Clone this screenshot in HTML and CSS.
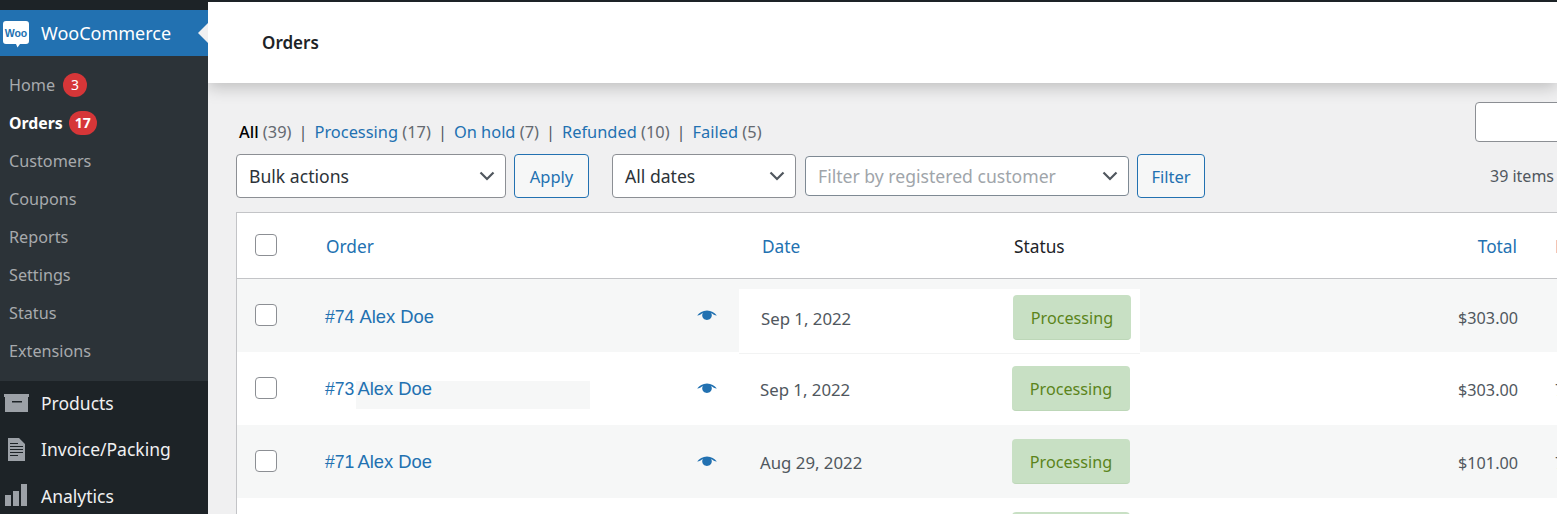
FILE: index.html
```html
<!DOCTYPE html>
<html lang="en">
<head>
<meta charset="utf-8">
<title>Orders</title>
<link rel="stylesheet" href="styles.css">
</head>
<body>
<aside class="sidebar">
  <div class="woo-head">
    <svg class="woo-logo" viewBox="0 0 26 27" width="26" height="27">
      <path class="logo-bubble" d="M3 0h20a3 3 0 0 1 3 3v17a3 3 0 0 1-3 3h-6l-2.500 3.500L13 23H3a3 3 0 0 1-3-3V3a3 3 0 0 1 3-3z"/>
      <text class="logo-text" x="13" y="15.500" text-anchor="middle">Woo</text>
    </svg>
    <span>WooCommerce</span>
  </div>
  <ul class="submenu">
    <li>Home <b class="count">3</b></li>
    <li class="current">Orders <b class="count">17</b></li>
    <li>Customers</li>
    <li>Coupons</li>
    <li>Reports</li>
    <li>Settings</li>
    <li>Status</li>
    <li>Extensions</li>
  </ul>
  <ul class="menu">
    <li>
      <svg class="menu-icon" viewBox="0 0 25 18" width="25" height="18"><path d="M0 0h25v3H0z"/><path fill-rule="evenodd" d="M1 3h23v15H1zM8 7v1.500h10V7z"/></svg>
      <span>Products</span>
    </li>
    <li>
      <svg class="menu-icon" viewBox="0 0 25 23" width="25" height="23"><path fill-rule="evenodd" d="M4 0h11l6 6v17H4zM6 5v1h8V5zM6 8v1h13V8zM6 11v1h13v-1zM6 14v1h13v-1zM6 17v1h8v-1z"/></svg>
      <span>Invoice/Packing</span>
    </li>
    <li>
      <svg class="menu-icon" viewBox="0 0 25 23" width="25" height="23"><path d="M1 11h6v11H1zM9 7h6v15H9zM17 0h6v22h-6z"/></svg>
      <span>Analytics</span>
    </li>
  </ul>
</aside>
<main class="main">
  <header class="page-head"><h1>Orders</h1></header>
  <div class="content">
    <div class="top-row">
      <ul class="views">
        <li class="active">All <span>(39)</span></li>
        <li><a>Processing</a> <span>(17)</span></li>
        <li><a>On hold</a> <span>(7)</span></li>
        <li><a>Refunded</a> <span>(10)</span></li>
        <li><a>Failed</a> <span>(5)</span></li>
      </ul>
      <div class="search"></div>
    </div>
    <div class="toolbar">
      <div class="select bulk"><span>Bulk actions</span><svg class="chev" viewBox="0 0 16 10" width="16" height="10"><path d="M1.500 1.500 8 8l6.500-6.500"/></svg></div>
      <button class="btn apply">Apply</button>
      <div class="select dates"><span>All dates</span><svg class="chev" viewBox="0 0 16 10" width="16" height="10"><path d="M1.500 1.500 8 8l6.500-6.500"/></svg></div>
      <div class="select customer"><span>Filter by registered customer</span><svg class="chev" viewBox="0 0 16 10" width="16" height="10"><path d="M1.500 1.500 8 8l6.500-6.500"/></svg></div>
      <button class="btn filter">Filter</button>
      <span class="items">39 items</span>
    </div>
    <section class="table">
      <div class="row head">
        <div class="cell-check"><i class="check"></i></div>
        <a class="col-link">Order</a>
        <span></span>
        <a class="col-link">Date</a>
        <span class="col-plain">Status</span>
        <a class="col-link total">Total</a>
        <span></span>
        <span class="col-next">B</span>
      </div>
      <div class="row odd row-patched">
        <i class="patch-white"></i>
        <div class="cell-check"><i class="check"></i></div>
        <a class="name"><span class="num">#74</span> Alex Doe</a>
        <svg class="eye" viewBox="0 0 20 12" width="20" height="12"><path d="M10 .5c4.300 0 7.600 2.400 9.800 5-2 .1-3.800-1.500-5.800-2.600.5.700.8 1.500.8 2.400 0 2.600-2.100 4.700-4.800 4.700S5.200 7.900 5.200 5.300c0-.9.300-1.700.8-2.400C4 4 2.200 5.600.2 5.500 2.400 2.900 5.700.5 10 .5z"/></svg>
        <span class="date">Sep 1, 2022</span>
        <div><span class="badge">Processing</span></div>
        <span class="total">$303.00</span>
      </div>
      <div class="row">
        <div class="cell-check"><i class="check"></i></div>
        <a class="name tight"><i class="patch-grey"></i><span class="num">#73</span> Alex Doe</a>
        <svg class="eye" viewBox="0 0 20 12" width="20" height="12"><path d="M10 .5c4.300 0 7.600 2.400 9.800 5-2 .1-3.800-1.500-5.800-2.600.5.700.8 1.500.8 2.400 0 2.600-2.100 4.700-4.800 4.700S5.200 7.900 5.200 5.300c0-.9.300-1.700.8-2.400C4 4 2.200 5.600.2 5.500 2.400 2.900 5.700.5 10 .5z"/></svg>
        <span class="date">Sep 1, 2022</span>
        <div><span class="badge">Processing</span></div>
        <span class="total">$303.00</span>
        <span></span>
        <span class="next">7</span>
      </div>
      <div class="row odd">
        <div class="cell-check"><i class="check"></i></div>
        <a class="name tight"><span class="num">#71</span> Alex Doe</a>
        <svg class="eye" viewBox="0 0 20 12" width="20" height="12"><path d="M10 .5c4.300 0 7.600 2.400 9.800 5-2 .1-3.800-1.500-5.800-2.600.5.700.8 1.500.8 2.400 0 2.600-2.100 4.700-4.800 4.700S5.200 7.900 5.200 5.300c0-.9.300-1.700.8-2.400C4 4 2.200 5.600.2 5.500 2.400 2.900 5.700.5 10 .5z"/></svg>
        <span class="date">Aug 29, 2022</span>
        <div><span class="badge">Processing</span></div>
        <span class="total">$101.00</span>
        <span></span>
        <span class="next">7</span>
      </div>
      <div class="row">
        <div class="cell-check"></div>
        <span></span>
        <span></span>
        <span></span>
        <div><span class="badge">Processing</span></div>
      </div>
    </section>
  </div>
</main>
</body>
</html>
```
FILE: styles.css
```css
* { box-sizing: border-box; }
html, body { height: 514px; overflow: hidden; }
body {
  margin: 0;
  display: flex;
  background: #f0f0f1;
  color: #2c3338;
  font-family: "Noto Sans", "Open Sans", sans-serif;
  font-size: 17px;
}
ul { list-style: none; margin: 0; padding: 0; }

/* sidebar */
.sidebar {
  flex: 0 0 208px;
  height: 514px;
  overflow: hidden;
  background: #1d2327;
  padding-top: 10px;
  color: #f0f0f1;
}
.woo-head {
  position: relative;
  height: 46px;
  background: #2271b1;
  display: flex;
  align-items: center;
  gap: 12px;
  padding-left: 3px;
  color: #fff;
  font-size: 18px;
}
.woo-head::after {
  content: "";
  position: absolute;
  right: 0;
  top: 13px;
  border: 10px solid transparent;
  border-left-width: 0;
  border-right-color: #f0f0f1;
}
.woo-logo { margin-top: 2px; }
.logo-bubble { fill: #fff; }
.logo-text { fill: #2271b1; font: 700 10.500px "Liberation Sans", sans-serif; }
.submenu {
  background: #2c3338;
  padding: 10px 0 11px;
  color: #a7aaad;
  font-size: 16.200px;
}
.submenu li {
  height: 38px;
  padding-left: 9px;
  display: flex;
  align-items: center;
  gap: 8px;
}
.submenu .current { color: #fff; font-weight: 700; font-size: 15.800px; gap: 6px; }
.count {
  min-width: 24px;
  height: 24px;
  padding: 0 6px;
  border-radius: 12px;
  background: #d63638;
  color: #fff;
  font-size: 14px;
  font-weight: 400;
  line-height: 24px;
  text-align: center;
}
.current .count { font-weight: 700; }
.menu li {
  height: 46.500px;
  padding: 0 0 3px 4px;
  display: flex;
  align-items: center;
  gap: 12px;
  font-size: 17.500px;
}
.menu-icon { flex: none; fill: #9ca1a7; }

/* main */
.main {
  flex: 0 0 1349px;
  width: 1349px;
  height: 514px;
  overflow: hidden;
  display: flex;
  flex-direction: column;
  border-top: 2px solid #1d2327;
}
.page-head {
  flex: none;
  height: 81px;
  background: #fff;
  padding-left: 54px;
  display: flex;
  align-items: center;
  box-shadow: 0 4px 16px rgba(0, 0, 0, .22);
  position: relative;
}
.page-head h1 { margin: 0; font-size: 17px; font-weight: 600; color: #1d2327; }
.content { flex: none; width: 1567px; padding: 19px 0 0 28px; }
.top-row { display: flex; align-items: flex-end; height: 40px; margin-bottom: 12px; }
.views { display: flex; padding: 0 0 0 3px; font-size: 16.400px; color: #646970; line-height: 20px; }
.views li + li::before { content: "|"; color: #50575e; margin: 0 7px; }
.views a { color: #2271b1; }
.views .active { color: #000; font-weight: 500; }
.views .active span { color: #646970; font-weight: 400; }
.search {
  margin-left: auto;
  width: 300px;
  height: 40px;
  background: #fff;
  border: 1px solid #8c8f94;
  border-radius: 4px;
}
.toolbar { display: flex; align-items: center; height: 44px; margin-bottom: 14px; }
.select {
  display: flex;
  align-items: center;
  justify-content: space-between;
  height: 44px;
  background: #fff;
  border: 1px solid #8c8f94;
  border-radius: 4px;
  padding: 0 10px 0 12px;
  color: #2c3338;
  font-size: 17.600px;
}
.bulk { width: 270px; }
.dates { width: 184px; margin-left: 23px; }
.customer { width: 324px; height: 40px; margin-left: 9px; border-color: #7e8993; color: #a0a5aa; }
.chev { fill: none; stroke: #50575e; stroke-width: 2.200; }
.btn {
  height: 44px;
  background: #f6f7f7;
  border: 1px solid #2271b1;
  border-radius: 4px;
  color: #2271b1;
  font: inherit;
  font-size: 16.500px;
  padding: 0;
}
.apply { width: 75px; margin-left: 8px; }
.filter { width: 68px; margin-left: 8px; }
.items { margin-left: 285px; color: #50575e; font-size: 16px; }

/* table */
.table { border: 1px solid #c3c4c7; border-right: 0; background: #fff; width: 100%; }
.row {
  position: relative;
  display: grid;
  grid-template-columns: 89px 371px 65px 252px 250px 253px 38px 40px;
  align-items: center;
  height: 73px;
}
.row.head { height: 66px; border-bottom: 1px solid #c3c4c7; font-size: 17.300px; }
.row.head > a, .row.head > span { margin-top: 2px; }
.row.odd { background: #f6f7f7; }
.cell-check { padding-left: 18px; }
.check {
  display: block;
  width: 22px;
  height: 22px;
  margin-top: -2px;
  background: #fff;
  border: 1px solid #8c8f94;
  border-radius: 4px;
}
.col-link { color: #2271b1; }
.col-plain { color: #1d2327; }
.col-next { color: #a46497; }
.total { margin: 2px -1px 0 0; text-align: right; color: #50575e; font-size: 16.200px; }
.col-link.total { margin-right: 0; color: #2271b1; font-size: 17.300px; }
.next { margin-top: 2px; color: #50575e; font-size: 16.200px; }
.name {
  position: relative;
  z-index: 0;
  margin-left: -1px;
  color: #2271b1;
  font: 18.400px "Liberation Sans", Arial, sans-serif;
}
.num { font-size: 17.600px; margin-right: 1px; }
.tight .num { margin-right: -1px; }
.eye { fill: #2271b1; margin-top: 0; }
.date { margin: 2px 0 0 -2px; color: #50575e; font-size: 16.800px; }
.badge {
  display: inline-block;
  width: 118px;
  height: 45px;
  margin-left: -2px;
  border-radius: 4px;
  background: #c8e0c4;
  border-bottom: 1px solid #bdd7b8;
  color: #5b841b;
  font-size: 16.200px;
  line-height: 46px;
  text-align: center;
}
.row-patched .name { margin-top: 2px; }
.row-patched .total { margin-top: 4px; }
.row-patched .date { margin: 6px 0 0 -1px; position: relative; }
.row-patched .badge { margin: 4px 0 0 -1px; position: relative; }
.patch-white {
  position: absolute;
  left: 502px;
  top: 10px;
  width: 401px;
  height: 65px;
  background: #fff;
  border-bottom: 1px solid #f2f3f3;
}
.patch-grey {
  position: absolute;
  z-index: -1;
  left: 31px;
  top: 3px;
  width: 234px;
  height: 28px;
  background: #f6f7f7;
}
```
